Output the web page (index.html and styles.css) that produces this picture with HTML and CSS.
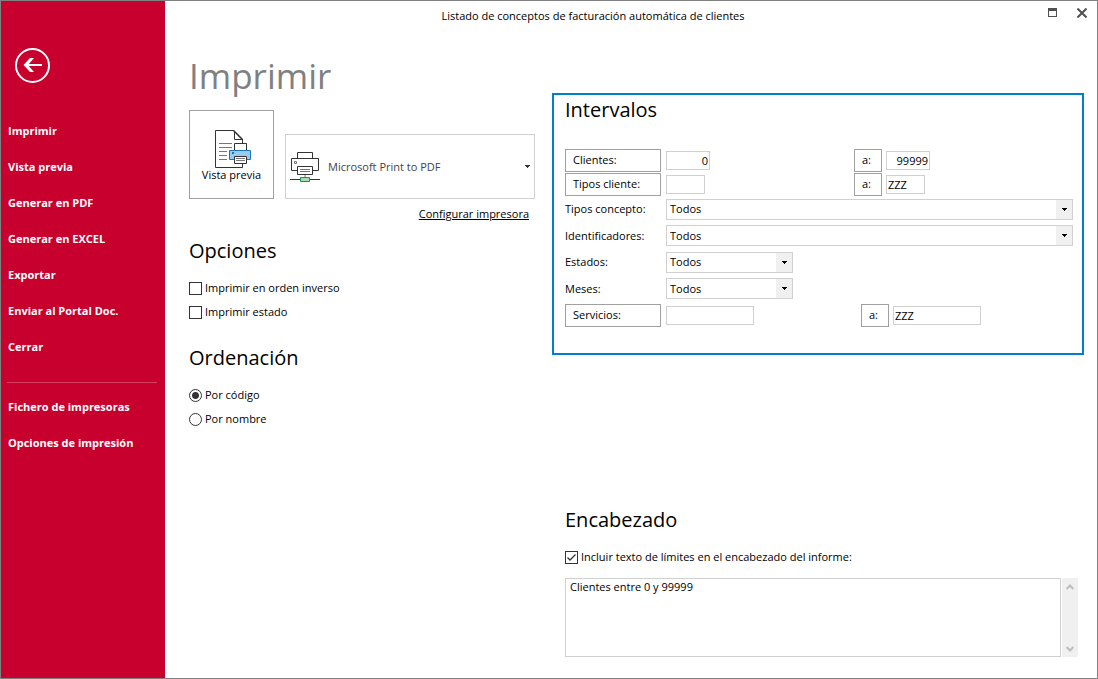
FILE: index.html
```html
<!DOCTYPE html>
<html lang="es">
<head>
<meta charset="utf-8">
<meta name="viewport" content="width=device-width, initial-scale=1">
<title>Listado de conceptos de facturación automática de clientes</title>
<link rel="stylesheet" href="styles.css">
</head>
<body>
<div class="window">
  <nav class="sidebar" aria-label="Menú">
    <button class="back" type="button" aria-label="Volver">
      <svg width="35" height="35" viewBox="0 0 35 35" fill="none" stroke="#fff">
        <circle cx="17.5" cy="17.5" r="16.5" stroke-width="2"/>
        <path d="M10 17H27" stroke-width="2"/>
        <path d="M15 10H19L13 17L19 24H15L8.500 17Z" fill="#fff" stroke="none"/>
      </svg>
    </button>
    <a class="nav-item" href="#imprimir">Imprimir</a>
    <a class="nav-item" href="#vista">Vista previa</a>
    <a class="nav-item" href="#pdf">Generar en PDF</a>
    <a class="nav-item" href="#excel">Generar en EXCEL</a>
    <a class="nav-item" href="#exportar">Exportar</a>
    <a class="nav-item" href="#portal">Enviar al Portal Doc.</a>
    <a class="nav-item" href="#cerrar">Cerrar</a>
    <hr class="nav-rule">
    <a class="nav-item" href="#fichero">Fichero de impresoras</a>
    <a class="nav-item" href="#opciones">Opciones de impresión</a>
  </nav>

  <div class="main">
    <header class="titlebar">
      <div class="caption">Listado de conceptos de facturación automática de clientes</div>
      <div class="window-buttons">
        <button class="window-button" type="button" aria-label="Maximizar">
          <svg width="9" height="9" viewBox="0 0 9 9"><path d="M0 0H9V9H0ZM1 3V8H8V3Z" fill="#505050" fill-rule="evenodd"/></svg>
        </button>
        <button class="window-button" type="button" aria-label="Cerrar ventana">
          <svg width="10" height="10" viewBox="0 0 10 10"><path d="M.5 .5L9.500 9.500M9.500 .5L.5 9.500" stroke="#505050" stroke-width="2"/></svg>
        </button>
      </div>
    </header>

    <main class="content">
      <div class="left">
        <h1 class="page-title">Imprimir</h1>
        <div class="printer-row">
          <button class="preview" type="button">
            <svg width="41" height="38" viewBox="-4 0 41 38" fill="none" stroke="#333">
              <path d="M27.500 13V9.500L18.500 .5H.5V37.500H27.500V34" fill="#fff"/>
              <path d="M19.500 1V9.500H27.500" />
              <path d="M18.500 .5L27.500 9.500" stroke-width="1.500"/>
              <path d="M4 13.500H17M4 17.500H17M4 21.500H12M4 25.500H12M4 29.500H12" stroke="#767676"/>
              <path d="M19.500 20V13.500H31.500V20" fill="#fff"/>
              <path d="M14.500 20.500H35.500V29.500H14.500Z" fill="#97cbf0" stroke="#1c74be"/>
              <path d="M17 22H19V24H17Z" fill="#1c74be" stroke="none"/>
              <path d="M19.500 26.500H31.500V33.500H19.500Z" fill="#fff"/>
              <path d="M21 28.500H30M21 30.500H30" stroke="#767676"/>
            </svg>
            <span>Vista previa</span>
          </button>
          <button class="printer" type="button" aria-haspopup="listbox">
            <svg width="30" height="30" viewBox="0 0 30 30" fill="none" stroke="#333">
              <path d="M7.500 6V.5H22.500V6"/>
              <path d="M7 18.500H1.500V6.500H28.500V18.500H23"/>
              <path d="M7.500 14.500H22.500V22.500H7.500Z"/>
              <path d="M10 17.500H20M10 19.500H20M4.500 9.500H6.500V11.500H4.500Z" stroke="#767676"/>
              <path d="M14 23H16V25H14Z" fill="#bbb" stroke="none"/>
              <path d="M0 27.500H30"/>
              <path d="M10.500 25.500H19.500V29.500H10.500Z" fill="#aadbb3" stroke="#109b3c"/>
            </svg>
            <span class="printer-name">Microsoft Print to PDF</span>
            <svg width="5" height="3" viewBox="0 0 5 3"><path d="M0 0H5V1H4V2H3V3H2V2H1V1H0Z" fill="#333"/></svg>
          </button>
        </div>
        <a class="configure" href="#configurar">Configurar impresora</a>

        <h2 class="heading">Opciones</h2>
        <label class="option"><input class="check" type="checkbox">Imprimir en orden inverso</label>
        <label class="option"><input class="check" type="checkbox">Imprimir estado</label>

        <h2 class="heading">Ordenación</h2>
        <label class="option"><input class="radio" type="radio" name="orden" checked>Por código</label>
        <label class="option"><input class="radio" type="radio" name="orden">Por nombre</label>
      </div>

      <div class="right">
        <section class="panel">
          <h2 class="panel-title">Intervalos</h2>
          <div class="row">
            <button class="lookup" type="button">Clientes:</button>
            <div class="from"><input class="field number" type="text" value="0" aria-label="Clientes desde"></div>
            <button class="until" type="button">a:</button>
            <input class="field number" type="text" value="99999" aria-label="Clientes hasta">
          </div>
          <div class="row">
            <button class="lookup" type="button">Tipos cliente:</button>
            <div class="from"><input class="field short" type="text" aria-label="Tipos cliente desde"></div>
            <button class="until" type="button">a:</button>
            <input class="field short" type="text" value="ZZZ" aria-label="Tipos cliente hasta">
          </div>
          <div class="row select-row compact">
            <label class="name" for="concepto">Tipos concepto:</label>
            <span class="combo"><select class="select" id="concepto"><option>Todos</option></select><svg class="arrow" width="5" height="3" viewBox="0 0 5 3"><path d="M0 0H5V1H4V2H3V3H2V2H1V1H0Z"/></svg></span>
          </div>
          <div class="row select-row">
            <label class="name" for="ident">Identificadores:</label>
            <span class="combo"><select class="select" id="ident"><option>Todos</option></select><svg class="arrow" width="5" height="3" viewBox="0 0 5 3"><path d="M0 0H5V1H4V2H3V3H2V2H1V1H0Z"/></svg></span>
          </div>
          <div class="row select-row compact">
            <label class="name" for="estados">Estados:</label>
            <span class="combo small"><select class="select" id="estados"><option>Todos</option></select><svg class="arrow" width="5" height="3" viewBox="0 0 5 3"><path d="M0 0H5V1H4V2H3V3H2V2H1V1H0Z"/></svg></span>
          </div>
          <div class="row select-row">
            <label class="name" for="meses">Meses:</label>
            <span class="combo small"><select class="select" id="meses"><option>Todos</option></select><svg class="arrow" width="5" height="3" viewBox="0 0 5 3"><path d="M0 0H5V1H4V2H3V3H2V2H1V1H0Z"/></svg></span>
          </div>
          <div class="row last">
            <button class="lookup" type="button">Servicios:</button>
            <div class="from wide"><input class="field long" type="text" aria-label="Servicios desde"></div>
            <button class="until" type="button">a:</button>
            <input class="field long" type="text" value="ZZZ" aria-label="Servicios hasta">
          </div>
        </section>

        <section class="header-text">
          <h2 class="heading">Encabezado</h2>
          <label class="option"><input class="check" type="checkbox" checked>Incluir texto de límites en el encabezado del informe:</label>
          <div class="memo">
            <textarea class="memo-text" aria-label="Texto del encabezado">Clientes entre 0 y 99999</textarea>
            <div class="scrollbar" aria-hidden="true">
              <svg width="8" height="6" viewBox="0 0 8 6"><path d="M.7 5L4 1.500L7.300 5" fill="none" stroke="#bdbdbd" stroke-width="2"/></svg>
              <svg width="8" height="6" viewBox="0 0 8 6"><path d="M.7 1L4 4.500L7.300 1" fill="none" stroke="#bdbdbd" stroke-width="2"/></svg>
            </div>
          </div>
        </section>
      </div>
    </main>
  </div>
</div>
</body>
</html>
```
FILE: styles.css
```css
*,
*::before,
*::after {
  box-sizing: border-box;
}

body {
  margin: 0;
  background: #fff;
  color: #000;
  font: 11px/16px "Open Sans", "Noto Sans", sans-serif;
}

button,
input,
select,
textarea {
  margin: 0;
  padding: 0;
  border: 0;
  border-radius: 0;
  background: #fff;
  color: inherit;
  font: inherit;
}

svg {
  display: block;
  flex: none;
}

.window {
  display: grid;
  grid-template-columns: 164px minmax(0, 1fr);
  min-height: 100vh;
  border: 1px solid #808080;
}

/* Sidebar */
.sidebar {
  padding-top: 47px;
  background: #c8002d;
  color: #fff;
}

.back {
  display: block;
  margin: 0 0 30px 14px;
  background: none;
}

.nav-item {
  display: block;
  padding-left: 7px;
  color: #fff;
  font-weight: 700;
  line-height: 36px;
  text-decoration: none;
}

.nav-rule {
  height: 1px;
  margin: 17px 8px 6px 6px;
  border: 0;
  background: #d4405f;
}

/* Title bar */
.main {
  display: flex;
  flex-direction: column;
}

.titlebar {
  display: flex;
  height: 32px;
}

.caption {
  flex: 1;
  line-height: 30px;
  text-align: center;
}

.window-buttons {
  display: flex;
  align-items: flex-start;
  gap: 20px;
  width: 76px;
  padding: 7px 0 0 27px;
}

.window-button {
  background: none;
}

/* Content */
.content {
  display: grid;
  flex: 1;
  grid-template-columns: 346px minmax(0, 1fr);
  gap: 17px;
  padding: 0 13px 21px 24px;
}

.left {
  display: flex;
  flex-direction: column;
  padding-top: 18px;
}

.page-title {
  margin: 0 0 9px;
  color: #808080;
  font-size: 35px;
  font-weight: 400;
  line-height: 50px;
}

.heading {
  margin: 19px 0 10px;
  font-size: 20px;
  font-weight: 400;
  line-height: 30px;
}

.printer-row {
  display: flex;
  align-items: flex-end;
  gap: 11px;
}

.preview {
  display: flex;
  flex-direction: column;
  align-items: center;
  width: 85px;
  height: 89px;
  padding-top: 19px;
  border: 1px solid #a0a0a0;
  line-height: 14px;
}

.printer {
  display: flex;
  flex: 1;
  align-items: center;
  gap: 8px;
  height: 65px;
  padding: 0 4px;
  border: 1px solid #d0d0d0;
  color: #444;
  text-align: left;
}

.printer-name {
  flex: 1;
}

.configure {
  align-self: flex-end;
  margin: 7px 6px -5px 0;
  color: #000;
}

.option {
  display: flex;
  align-items: center;
  gap: 3px;
  height: 24px;
}

.check,
.radio {
  flex: none;
  appearance: none;
  width: 13px;
  height: 13px;
  border: 1px solid #333;
}

.check:checked {
  background: #fff url("data:image/svg+xml,%3Csvg xmlns='http://www.w3.org/2000/svg' viewBox='0 0 11 11'%3E%3Cpath d='M1.500 5.500L4 8L9.500 2.500' fill='none' stroke='%23333' stroke-width='1.300'/%3E%3C/svg%3E");
}

.radio {
  border-radius: 50%;
}

.radio:checked {
  background: radial-gradient(circle, #333 3px, #fff 4px);
}

/* Range panel */
.right {
  display: flex;
  flex-direction: column;
  justify-content: space-between;
  padding-top: 60px;
}

.panel {
  padding: 0 9px 26px 11px;
  border: 2px solid #0080c8;
}

.panel-title {
  margin: 0 0 23px;
  font-size: 20px;
  font-weight: 400;
  line-height: 30px;
}

.row {
  display: flex;
  align-items: center;
  height: 24px;
}

.select-row {
  height: 27px;
}

.compact {
  height: 26px;
}

.last {
  margin-top: 1px;
}

.lookup,
.name {
  flex: none;
  width: 96px;
  margin-right: 5px;
}

.lookup,
.until {
  height: 23px;
  padding-left: 7px;
  border: 1px solid #a0a0a0;
  text-align: left;
}

.until {
  flex: none;
  width: 28px;
  margin-right: 4px;
}

.from {
  flex: none;
  width: 188px;
}

.from.wide {
  width: 195px;
}

.field {
  display: block;
  height: 19px;
  padding: 0 1px;
  border: 1px solid #d0d0d0;
}

.number {
  width: 44px;
  text-align: right;
}

.short {
  width: 39px;
}

.long {
  width: 88px;
}

.combo {
  position: relative;
  flex: 1;
}

.combo.small {
  flex: 0 0 127px;
}

.select {
  display: block;
  appearance: none;
  width: 100%;
  height: 21px;
  padding-left: 3px;
  border: 1px solid #d0d0d0;
  background: linear-gradient(to left, #f0f0f0 16px, #fff 16px);
}

.arrow {
  position: absolute;
  top: 9px;
  right: 6px;
  pointer-events: none;
}

/* Report header text */
.header-text {
  padding: 0 6px 0 13px;
}

.memo {
  display: flex;
  gap: 1px;
  height: 79px;
  margin-top: 9px;
}

.memo-text {
  flex: 1;
  padding: 0 4px;
  border: 1px solid #d0d0d0;
  resize: none;
}

.scrollbar {
  display: flex;
  flex-direction: column;
  align-items: center;
  justify-content: space-between;
  width: 16px;
  padding: 6px 0 5px;
  background: #f0f0f0;
}
```
